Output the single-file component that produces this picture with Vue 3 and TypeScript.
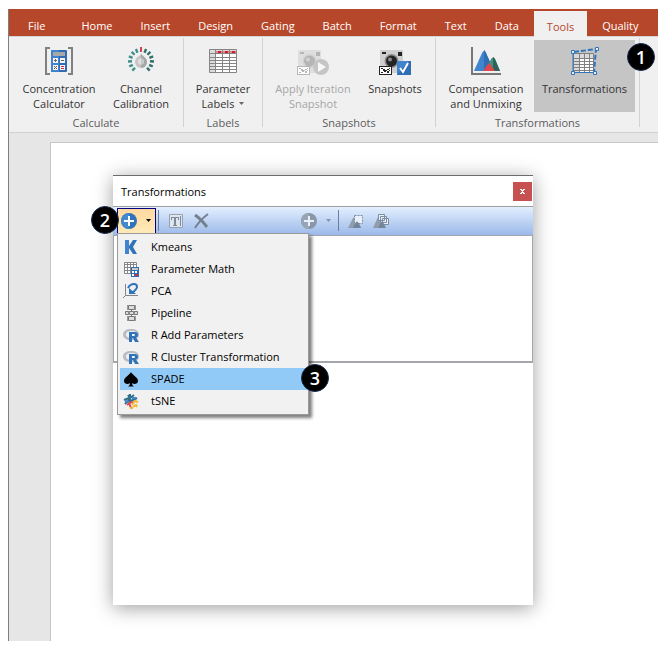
<script setup lang="ts">
interface Command {
  lines: string[]
  icon: string
  disabled?: boolean
  active?: boolean
  dropdown?: boolean
  badge?: number
}
interface Group {
  label: string
  commands: Command[]
}
interface MenuEntry {
  label: string
  icon: string
  selected?: boolean
}

const tabs: string[] = [
  'File', 'Home', 'Insert', 'Design', 'Gating', 'Batch',
  'Format', 'Text', 'Data', 'Tools', 'Quality',
]
const activeTab = 'Tools'

const camera = (dark: string, mid: string, body: string): string => `
  <path fill="${body}" d="M1 4q0-1 1-1h21q1 0 1 1v22H1z"/>
  <path fill="${dark}" d="M3 5h4v2H3zM19 5h4v4h-4z"/>
  <circle cx="12.5" cy="14" r="7" fill="${mid}"/>
  <circle cx="12.5" cy="14" r="5.500" fill="${dark}"/>
  <circle cx="11" cy="12.500" r="2" fill="${mid}"/>
  <path fill="${dark}" d="M0 19h13v9H0z"/><path fill="#fff" d="M1 20h11v7H1z"/>
  <path fill="${dark}" d="M2 21h2v1H2zM4 22h2v2H4zM6 23h2v1H6zM8 22h2v1H8zM10 21h1v1h-1zM2 25h2v1H2zM5 24h2v1H5zM8 24h2v2H8zM10 23h1v1h-1z"/>`

// Tick marks round the calibration knob, from lower left over the top to lower right.
const ticks: string = Array.from({ length: 13 }, (_, i) => {
  const angle = -138 + i * 23
  const colour = i === 6 ? '#d9444b' : i < 6 ? '#3f8f8a' : '#2f6f6c'
  const shape = i === 6 ? 'M15 0h2v5h-2z' : 'M14.800 1h2.400v4h-2.400z'
  return `<path fill="${colour}" d="${shape}" transform="rotate(${angle} 16 14)"/>`
}).join('')

const ribbonIcons: Record<string, string> = {
  calculator: `
    <path fill="none" stroke="#808080" stroke-width="2" d="M7 1H3v26h4M25 1h4v26h-4"/>
    <rect x="8" y="3" width="16" height="22" rx="1" fill="#2f6eb5"/>
    <path fill="#3f84cc" d="M9 3h7v22H9q-1 0-1-1V4q0-1 1-1z"/>
    <path fill="#a8a8a8" d="M10 5h12v4H10z"/>
    <path fill="#f4f4f4" d="M10 11h5v5h-5zM17 11h5v5h-5zM10 18h5v5h-5zM17 18h5v5h-5z"/>
    <path stroke="#666" d="M11 13.500h3M12.500 12v3M18 13.500h3M11 19l3 3M14 19l-3 3"/>
    <path stroke="#d22f3c" d="M18 19.500h3M18 21.500h3"/>`,
  knob: `${ticks}
    <circle cx="16" cy="15" r="6" fill="#c6c6c6"/>
    <path fill="#c6c6c6" d="M11 12l5-5 5 5z"/>
    <path fill="#a6a6a6" d="M16 7l5 5q1 2 1 3a6 6 0 0 1-6 6z"/>
    <circle cx="16" cy="14.500" r="3" fill="#e0e0e0"/><path fill="#c8c8c8" d="M16 11.500a3 3 0 0 1 0 6z"/>`,
  table: `
    <path fill="#fff" d="M2 2h28v24H2z"/><path fill="#dcdcdc" d="M2 2h28v4H2zM2 2h7v24H2z"/>
    <path fill="none" stroke="#858585" d="M2.500 2.500h27v23h-27zM8.500 2v24M15.500 2v24M22.500 2v24M2 6.500h28M2 10.500h28M2 13.500h28M2 16.500h28M2 19.500h28M2 22.500h28"/>
    <path fill="#e5848a" d="M9 4h6v2H9zM16 4h6v2h-6zM23 4h6v2h-6z"/>
    <path fill="#cf1f2e" d="M11 4h3v2h-3zM18 4h3v2h-3zM25 4h3v2h-3z"/>`,
  iteration: `${camera('#b5b5b5', '#d3d3d3', '#dedede')}
    <circle cx="24" cy="20" r="8" fill="#c5c5c5"/><path fill="#f7f7f7" d="M21 15l8 5-8 5z"/>`,
  snapshots: `${camera('#242424', '#8c8c8c', '#cfcfcf')}
    <path fill="#2f6eb5" d="M18 14h14v14H18z"/><path fill="#3f84cc" d="M18 14h12L18 28z"/>
    <path fill="none" stroke="#fff" stroke-width="2" d="M21 21l3 4 5-9"/>`,
  peaks: `
    <path fill="#3f84cc" d="M4 24L12 6q2-4 4 0l8 18z"/><path fill="#2f6eb5" d="M14 3q1 0 2 3l8 18H14z"/>
    <path fill="#41917c" d="M16 24l5-12q2-3 4 0l5 12z"/><path fill="#2f645c" d="M23 10q1 0 2 2l5 12h-7z"/>
    <path fill="#e0474c" d="M13 24l5-7q1-2 2 0l5 7z"/>
    <path fill="none" stroke="#777" stroke-width="2" d="M2 0v27h29"/>`,
  warp: `
    <path fill="#fff" d="M4 6h21v20H4z"/><path fill="#dadada" d="M4 6h21v5H4zM4 6h6v20H4z"/>
    <path fill="none" stroke="#808080" d="M4.500 6.500h20v19h-20zM10.500 6v20M15.500 6v20M20.500 6v20M4 11.500h21M4 14.500h21M4 17.500h21M4 20.500h21M4 23.500h21"/>
    <path fill="none" stroke="#2f73ba" d="M4 5v20.500h22"/>
    <path fill="none" stroke="#2f73ba" stroke-width="2" stroke-dasharray="5 2" d="M5 5l22-3-2 24"/>
    <path fill="#e8f2fc" stroke="#2f73ba" d="M2.500 3.500h3v3h-3zM26.500 .5h3v3h-3zM2.500 24.500h3v3h-3zM24.500 24.500h3v3h-3z"/>`,
}

const groups: Group[] = [
  {
    label: 'Calculate',
    commands: [
      { lines: ['Concentration', 'Calculator'], icon: 'calculator' },
      { lines: ['Channel', 'Calibration'], icon: 'knob' },
    ],
  },
  { label: 'Labels', commands: [{ lines: ['Parameter', 'Labels'], icon: 'table', dropdown: true }] },
  {
    label: 'Snapshots',
    commands: [
      { lines: ['Apply Iteration', 'Snapshot'], icon: 'iteration', disabled: true },
      { lines: ['Snapshots'], icon: 'snapshots' },
    ],
  },
  {
    label: 'Transformations',
    commands: [
      { lines: ['Compensation', 'and Unmixing'], icon: 'peaks' },
      { lines: ['Transformations'], icon: 'warp', active: true, badge: 1 },
    ],
  },
]

const rLogo = `
  <path fill="#b9bdc3" fill-rule="evenodd" d="M8 2c5 0 8 2 8 5.500S13 13 8 13 0 11 0 7.500 3 2 8 2zm1 2C6 4 3 5 3 7.500S6 11 9 11s5-1 5-3.500S12 4 9 4z"/>
  <path fill="#2f73ba" fill-rule="evenodd" d="M6 5h6q3 0 3 3 0 2-2 2.500l3 4.500h-4l-2-4H9v4H6zm3 2v2h2q1 0 1-1t-1-1z"/>`

const menu: MenuEntry[] = [
  {
    label: 'Kmeans',
    icon: `<path fill="#3f84cc" d="M2 1h4v14H2z"/><path fill="#2f73ba" d="M6 7l4-6h4l-4 7 4 7h-4l-4-6z"/>`,
  },
  {
    label: 'Parameter Math',
    icon: `<path fill="#fff" d="M1 1h13v12H1z"/>
      <path fill="none" stroke="#858585" d="M1.500 1.500h12v11h-12zM4.500 1v12M7.500 1v12M10.500 1v12M1 3.500h13M1 6.500h13M1 9.500h13"/>
      <path fill="#2f6eb5" d="M8 6h8v10H8z"/><path fill="#c9c9c9" d="M9 7h6v2H9z"/>
      <path fill="#fff" d="M9 10h2v2H9zM12 10h2v2h-2zM9 13h2v2H9z"/><path fill="#d22f3c" d="M12 13h3v2h-3z"/>`,
  },
  {
    label: 'PCA',
    icon: `<path fill="none" stroke="#858585" d="M2.500 1v11.500H15M2.500 12.500L0 15"/>
      <path fill="none" stroke="#2f73ba" stroke-width="2" d="M5 5q2-4 6-4 3 0 3 3 0 2-5 6"/>
      <path fill="#2f73ba" d="M6 5v6h7z"/>`,
  },
  {
    label: 'Pipeline',
    icon: `<path fill="none" stroke="#777" d="M8.500 4v8"/>
      <path fill="#dcdcdc" stroke="#777" d="M5.500 .5h6v4h-6zM2.500 6.500h12v3h-12zM5.500 11.500h6v4h-6z"/>
      <path stroke="#999" d="M4.500 0v5M12.500 0v5M4.500 11v5M12.500 11v5"/><path fill="#888" d="M5 6h2v4H5zM10 6h2v4h-2z"/>`,
  },
  { label: 'R Add Parameters', icon: rLogo },
  { label: 'R Cluster Transformation', icon: rLogo },
  {
    label: 'SPADE',
    selected: true,
    icon: `<path d="M8 1c1 3 7 5 7 9 0 3-4 4-6 2 0 2 1 3 2 3.500H5c1-.5 2-1.500 2-3.500-2 2-6 1-6-2 0-4 6-6 7-9z"/>`,
  },
  {
    label: 'tSNE',
    icon: `<path fill="none" stroke="#2f6f8c" stroke-width="2" d="M5 2l2 3 4-3M1 7l5-2 2 3 6-3M2 11l4-4 2 3M7 1v4"/>
      <path fill="none" stroke="#3f84cc" stroke-width="2" d="M2 8l4 1M9 5h4"/>
      <path fill="none" stroke="#e0474c" stroke-width="2" d="M4 12l4-3 3 1M6 10l2 5"/>
      <path fill="none" stroke="#f2b632" stroke-width="2" d="M9 12l3-4 3 1M10 14l3-2 1 2M7 15h3"/>`,
  },
]
</script>

<template>
  <main class="app">
    <nav class="tabs" role="tablist" aria-label="Ribbon">
      <button
        v-for="tab in tabs"
        :key="tab"
        class="tab"
        :class="{ current: tab === activeTab }"
        type="button"
        role="tab"
        :aria-selected="tab === activeTab"
      >{{ tab }}</button>
    </nav>

    <div class="ribbon">
      <section v-for="group in groups" :key="group.label" class="group">
        <div class="commands">
          <button
            v-for="command in group.commands"
            :key="command.icon"
            class="command"
            :class="{ active: command.active }"
            :disabled="command.disabled"
            type="button"
          >
            <svg class="command-icon" viewBox="0 0 32 28" aria-hidden="true" v-html="ribbonIcons[command.icon]" />
            <span v-for="(line, i) in command.lines" :key="line" class="line">
              {{ line }}
              <svg v-if="command.dropdown && i === command.lines.length - 1" class="caret" viewBox="0 0 5 3" aria-hidden="true">
                <path fill="#666" d="M0 0h5L2.500 3z" />
              </svg>
            </span>
            <span v-if="command.badge" class="badge on-command">{{ command.badge }}</span>
          </button>
        </div>
        <h2 class="group-label">{{ group.label }}</h2>
      </section>
    </div>

    <div class="workspace">
      <div class="page">
        <section class="dialog" aria-labelledby="dialog-title">
          <header class="title-bar">
            <h1 id="dialog-title" class="title">Transformations</h1>
            <button class="close" type="button" aria-label="Close">
              <svg viewBox="0 0 7 7" aria-hidden="true"><path fill="#fff" d="M1 1h2v1h1V1h2v1H5v1H4v1h1v1h1v1H4V5H3v1H1V5h1V4h1V3H2V2H1z" /></svg>
            </button>
          </header>

          <div class="toolbar" role="toolbar" aria-label="Transformation actions">
            <div class="adder">
              <button class="tool add" type="button" aria-label="Add transformation" aria-haspopup="menu" aria-expanded="true">
                <svg class="icon" viewBox="0 0 16 16" aria-hidden="true">
                  <circle cx="8" cy="8" r="8" fill="#2f73ba" /><path fill="#4389cf" d="M8 0a8 8 0 0 0 0 16z" />
                  <path fill="#fff" d="M7 3h2v4h4v2H9v4H7V9H3V7h4z" />
                </svg>
                <svg class="caret" viewBox="0 0 5 3" aria-hidden="true"><path d="M0 0h5L2.500 3z" /></svg>
              </button>
              <span class="badge on-adder">2</span>
              <ul class="menu" role="menu">
                <li v-for="entry in menu" :key="entry.label" role="none">
                  <button class="entry" :class="{ selected: entry.selected }" type="button" role="menuitem">
                    <svg class="icon" viewBox="0 0 16 16" aria-hidden="true" v-html="entry.icon" />
                    <span>{{ entry.label }}</span>
                    <span v-if="entry.selected" class="badge on-entry">3</span>
                  </button>
                </li>
              </ul>
            </div>
            <span class="divider" />
            <button class="tool" type="button" aria-label="Rename" disabled>
              <svg class="icon" viewBox="0 0 16 16" aria-hidden="true">
                <path fill="#dfe6ef" stroke="#98a2af" d="M1.500 1.500h13v13h-13z" />
                <path fill="#7f8a99" d="M3 4h8v3h-1V5H8v7h1v1H5v-1h1V5H4v2H3zM12 3h1v10h-1z" />
              </svg>
            </button>
            <button class="tool" type="button" aria-label="Delete" disabled>
              <svg class="icon" viewBox="0 0 16 16" aria-hidden="true">
                <path fill="none" stroke="#75818f" stroke-width="3" d="M2 2q6 4 12 12" />
                <path fill="none" stroke="#75818f" stroke-width="2" d="M15 1Q7 7 2 15" />
              </svg>
            </button>
            <div class="secondary">
              <button class="tool add" type="button" aria-label="Add step" disabled>
                <svg class="icon" viewBox="0 0 16 16" aria-hidden="true">
                  <circle cx="8" cy="8" r="8" fill="#8a97a8" /><path fill="#98a5b5" d="M8 0a8 8 0 0 0 0 16z" />
                  <path fill="#e9f1fb" d="M7 3h2v4h4v2H9v4H7V9H3V7h4z" />
                </svg>
                <svg class="caret" viewBox="0 0 5 3" aria-hidden="true"><path fill="#8593a6" d="M0 0h5L2.500 3z" /></svg>
              </button>
              <span class="divider" />
              <button class="tool" type="button" aria-label="Create gate" disabled>
                <svg class="icon" viewBox="0 0 16 16" aria-hidden="true">
                  <path fill="#8f9cac" d="M0 15L5 5q1-1 2 0l5 10z" /><path fill="#74859a" d="M5 15l3-6q1-1 2 0l3 6z" />
                  <path fill="#e8f0fb" stroke="#7c8da2" stroke-dasharray="2 1" d="M6.500 2.500h8v8h-8z" />
                  <path fill="#74859a" d="M5 15l3-6q1-1 2 0l3 6z" />
                </svg>
              </button>
              <button class="tool" type="button" aria-label="Copy gates" disabled>
                <svg class="icon" viewBox="0 0 16 16" aria-hidden="true">
                  <path fill="#8f9cac" d="M0 15L5 4q1-1 2 0l5 11z" />
                  <path fill="#e8f0fb" stroke="#7c8da2" d="M5.500 1.500h6v6h-6zM7.500 3.500h6v6h-6zM9.500 5.500h6v6h-6z" />
                  <path fill="#74859a" d="M5 15l3-6q1-1 2 0l3 6z" />
                </svg>
              </button>
            </div>
          </div>

          <div class="list" />
          <div class="detail" />
        </section>
      </div>
    </div>
  </main>
</template>

<style>
body {
  background: #fff;
}
</style>

<style scoped>
.app {
  margin: 9px 11px 11px 8px;
  border-left: 1px solid #7f7f7f;
  font: 11px/15px 'Open Sans', 'Noto Sans', sans-serif;
  color: #333;
}
button {
  margin: 0;
  padding: 0;
  border: 0;
  background: none;
  font: inherit;
  color: inherit;
}
svg {
  display: block;
}
.tabs {
  display: flex;
  align-items: flex-end;
  gap: 2px;
  height: 27px;
  padding-left: 6px;
  background: #b7472a;
}
.tab {
  height: 25px;
  padding: 4px 13px 0;
  color: #fff;
}
.tab:first-child {
  margin-right: 8px;
}
.tab.current {
  height: 26px;
  margin-bottom: -1px;
  background: #f0f0f0;
  color: #b7472a;
}
.ribbon {
  display: grid;
  grid-template-columns: 175px 79px 173px 204px;
  height: 97px;
  box-sizing: border-box;
  border-top: 1px solid #d4d4d4;
  border-bottom: 1px solid #d0d0d0;
  background: #f0f0f0;
}
.group {
  display: flex;
  flex-direction: column;
  height: 89px;
  margin-top: 1px;
  box-sizing: border-box;
  border-right: 1px solid #d2d2d2;
}
.commands {
  display: flex;
  gap: 4px;
  margin-top: 2px;
}
.command {
  position: relative;
  display: flex;
  flex-direction: column;
  align-items: center;
  height: 72px;
  min-width: 78px;
  padding: 7px 0 0;
  white-space: nowrap;
}
.command:first-child:not(:only-child) {
  margin-left: 11px;
}
.command:disabled {
  color: #a6a6a6;
}
.command.active {
  min-width: 101px;
  margin-left: 5px;
  background: #c5c5c5;
}
.command-icon {
  width: 32px;
  height: 28px;
  margin-bottom: 6px;
}
.line {
  display: flex;
  align-items: center;
  gap: 5px;
}
.caret {
  width: 5px;
  height: 3px;
}
.group-label {
  margin: 3px 0 0;
  font-size: 11px;
  font-weight: 400;
  text-align: center;
  color: #5c5c5c;
}
.badge {
  position: absolute;
  z-index: 2;
  width: 26px;
  height: 26px;
  border: 1px solid #1c2c50;
  border-radius: 50%;
  background: #000;
  color: #fff;
  font: 600 18px/26px 'Open Sans', 'Noto Sans', sans-serif;
  text-align: center;
}
.on-command {
  top: 3px;
  right: -20px;
}
.on-adder {
  top: -2px;
  left: -26px;
}
.on-entry {
  top: -4px;
  right: -22px;
}
.workspace {
  padding: 9px 0 0 41px;
  background: #e6e6e6;
}
.page {
  padding: 32px 62px 36px;
  border-top: 1px solid #c6c6c6;
  border-left: 1px solid #c6c6c6;
  background: #fff;
}
.dialog {
  max-width: 420px;
  background: #fff;
  box-shadow: 0 3px 18px rgba(0, 0, 0, 0.38);
  color: #000;
}
.title-bar {
  display: flex;
  align-items: center;
  justify-content: space-between;
  height: 32px;
  box-sizing: border-box;
  padding: 1px 1px 0 8px;
  border-top: 1px solid #6b6b70;
  border-bottom: 1px solid #a0a0a0;
}
.title {
  margin: 0;
  font-size: 11px;
  font-weight: 400;
}
.close {
  display: grid;
  place-items: center;
  width: 19px;
  height: 19px;
  background: #c75050;
}
.close svg {
  width: 7px;
  height: 7px;
}
.toolbar {
  display: flex;
  align-items: center;
  height: 29px;
  box-sizing: border-box;
  padding: 0 4px 1px;
  border-bottom: 1px solid #a2a4b2;
  background: linear-gradient(#e3efff, #9bb9e9);
}
.icon {
  flex: none;
  width: 16px;
  height: 16px;
}
.tool {
  display: flex;
  align-items: center;
  width: 16px;
  height: 24px;
  margin-left: 9px;
}
.tool.add {
  width: 39px;
  height: 26px;
  gap: 9px;
  margin: 0;
  box-sizing: border-box;
  padding: 0 4px;
}
.adder {
  position: relative;
}
.adder .tool.add {
  border: 1px solid #000080;
  background: linear-gradient(#ffd9a0, #ffeab8);
  padding: 0 3px;
}
.divider {
  width: 1px;
  height: 21px;
  margin-left: 2px;
  background: #6a7f9f;
}
.secondary {
  display: flex;
  align-items: center;
  margin-left: 88px;
}
.menu {
  position: absolute;
  z-index: 1;
  top: 25px;
  left: 0;
  width: 192px;
  margin: 0;
  box-sizing: border-box;
  padding: 2px 1px 2px 2px;
  border: 1px solid #9a9a9a;
  background: #f1f1f1;
  box-shadow: 3px 3px 3px rgba(0, 0, 0, 0.5);
  list-style: none;
}
.entry {
  position: relative;
  display: flex;
  align-items: center;
  gap: 12px;
  width: 100%;
  height: 22px;
  padding: 0 3px;
  white-space: nowrap;
}
.entry.selected {
  background: #91c9f7;
}
.list {
  height: 125px;
  border: 1px solid #a5a5ad;
  border-width: 0 1px 2px;
}
.detail {
  height: 242px;
}
</style>
